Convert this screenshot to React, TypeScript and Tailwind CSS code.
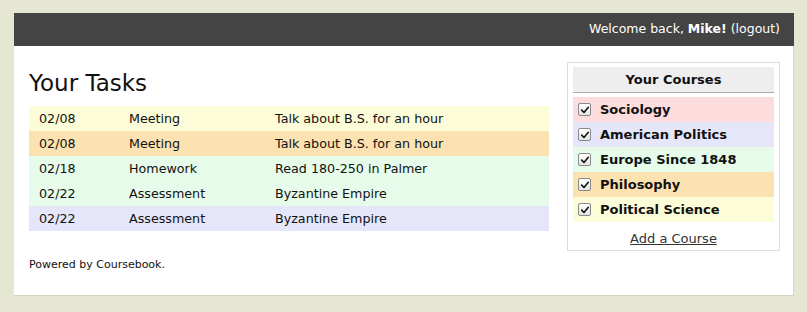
const tasks = [
  { date: "02/08", type: "Meeting", desc: "Talk about B.S. for an hour", bg: "bg-[#fdfcd8]" },
  { date: "02/08", type: "Meeting", desc: "Talk about B.S. for an hour", bg: "bg-[#fce2b0]" },
  { date: "02/18", type: "Homework", desc: "Read 180-250 in Palmer", bg: "bg-[#e6fbea]" },
  { date: "02/22", type: "Assessment", desc: "Byzantine Empire", bg: "bg-[#e6fbea]" },
  { date: "02/22", type: "Assessment", desc: "Byzantine Empire", bg: "bg-[#e6e6fa]" },
];

const courses = [
  { name: "Sociology", bg: "bg-[#fcdcdc]" },
  { name: "American Politics", bg: "bg-[#e6e6fa]" },
  { name: "Europe Since 1848", bg: "bg-[#e6fbea]" },
  { name: "Philosophy", bg: "bg-[#fce2b0]" },
  { name: "Political Science", bg: "bg-[#fdfcd8]" },
];

function CheckBox() {
  return (
    <span className="flex h-[13px] w-[13px] items-center justify-center rounded-[2px] border border-[#8a8a8a] bg-gradient-to-b from-white to-[#e4e4e4]">
      <svg viewBox="0 0 12 12" className="h-[10px] w-[10px]">
        <path d="M2 6.2 L4.8 9 L10 2.8" fill="none" stroke="#111" strokeWidth="1.9" strokeLinecap="round" strokeLinejoin="round" />
      </svg>
    </span>
  );
}

export default function App() {
  return (
    <div className="min-h-screen bg-[#e5e7d2] pl-[14px] pr-[13px] pt-[13px] font-['DejaVu_Sans',sans-serif] text-[#111]">
      {/* Top bar */}
      <div className="flex h-[33px] items-center justify-end bg-[#444444] pr-[14px] text-[12.5px] text-white">
        Welcome back,&nbsp;<span className="font-bold">Mike!</span>&nbsp;(logout)
      </div>

      {/* Main panel */}
      <div className="flex h-[250px] border-b border-r border-[#d3d6c0] bg-white pl-[15px] pr-[13px] pt-[16px]">
        <div className="flex-1">
          <h1 className="pt-[8px] text-[23px] leading-[26px]">Your Tasks</h1>
          <div className="mt-[10px]">
            {tasks.map((t, i) => (
              <div key={i} className={`flex h-[25px] items-center text-[12.7px] ${t.bg}`}>
                <span className="w-[100px] pl-[10px]">{t.date}</span>
                <span className="w-[146px]">{t.type}</span>
                <span>{t.desc}</span>
              </div>
            ))}
          </div>
          <p className="mt-[26px] text-[11px]">Powered by Coursebook.</p>
        </div>

        {/* Courses box */}
        <div className="ml-[18px] h-[189px] w-[213px] border border-[#dddddd] px-[5px] pt-[4px]">
          <div className="flex h-[26px] items-center justify-center border-b border-[#aaaaaa] bg-[#eeeeee] pt-[1px] text-[13px] font-bold">
            Your Courses
          </div>
          <div className="mt-[4px]">
            {courses.map((c) => (
              <div key={c.name} className={`flex h-[25px] items-center gap-[9px] pl-[5px] text-[13px] font-bold ${c.bg}`}>
                <CheckBox />
                {c.name}
              </div>
            ))}
          </div>
          <div className="mt-[7px] text-center text-[13px] text-[#333] underline">Add a Course</div>
        </div>
      </div>
    </div>
  );
}
